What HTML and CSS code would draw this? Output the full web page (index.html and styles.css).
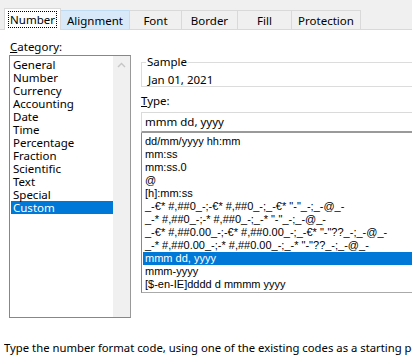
FILE: index.html
```html
<!DOCTYPE html>
<html lang="en">
<head>
  <meta charset="UTF-8">
  <title>Format Cells</title>
  <link rel="stylesheet" href="styles.css">
</head>
<body>

  <div class="tabs">
    <div class="tab active"><span class="focus">Number</span></div>
    <div class="tab hover">Alignment</div>
    <div class="tab">Font</div>
    <div class="tab">Border</div>
    <div class="tab">Fill</div>
    <div class="tab">Protection</div>
  </div>

  <div class="panel">
    <div class="left">
      <div class="label"><u>C</u>ategory:</div>
      <div class="category">
        <ul class="items">
          <li>General</li>
          <li>Number</li>
          <li>Currency</li>
          <li>Accounting</li>
          <li>Date</li>
          <li>Time</li>
          <li>Percentage</li>
          <li>Fraction</li>
          <li>Scientific</li>
          <li>Text</li>
          <li>Special</li>
          <li class="selected">Custom</li>
        </ul>
        <div class="scrollbar">
          <svg width="9" height="6" viewBox="0 0 9 6"><path d="M1 5 L4.5 1.5 L8 5" fill="none" stroke="#c6c6c6" stroke-width="1.4"/></svg>
        </div>
      </div>
    </div>

    <div class="right">
      <fieldset class="sample">
        <legend>Sample</legend>
        <div class="sample-value">Jan 01, 2021</div>
      </fieldset>
      <div class="label type-label"><u>T</u>ype:</div>
      <div class="type-input">mmm dd, yyyy</div>
      <ul class="type-list">
        <li>dd/mm/yyyy hh:mm</li>
        <li>mm:ss</li>
        <li>mm:ss.0</li>
        <li>@</li>
        <li>[h]:mm:ss</li>
        <li>_-€* #,##0_-;-€* #,##0_-;_-€* "-"_-;_-@_-</li>
        <li>_-* #,##0_-;-* #,##0_-;_-* "-"_-;_-@_-</li>
        <li>_-€* #,##0.00_-;-€* #,##0.00_-;_-€* "-"??_-;_-@_-</li>
        <li>_-* #,##0.00_-;-* #,##0.00_-;_-* "-"??_-;_-@_-</li>
        <li class="selected">mmm dd, yyyy</li>
        <li>mmm-yyyy</li>
        <li>[$-en-IE]dddd d mmmm yyyy</li>
      </ul>
    </div>
  </div>

  <p class="hint">Type the number format code, using one of the existing codes as a starting point.</p>

</body>
</html>
```

FILE: styles.css
```css
body {
  margin: 0;
  width: 412px;
  height: 360px;
  overflow: hidden;
  background: #fff;
  font-family: "Noto Sans", "Open Sans", sans-serif;
  font-size: 11.5px;
  color: #000;
}

.tabs {
  display: flex;
  align-items: flex-end;
  height: 29px;
  padding-left: 4px;
  background: #f0f0f0;
  border-bottom: 1px solid #d9d9d9;
}

.tab {
  display: flex;
  align-items: center;
  justify-content: center;
  height: 18px;
  border: 1px solid #d9d9d9;
  border-bottom: none;
  margin-left: -1px;
  box-sizing: content-box;
  white-space: nowrap;
}

.tab:nth-child(1) { width: 55px; }
.tab:nth-child(2) { width: 68px; }
.tab:nth-child(3) { width: 51px; }
.tab:nth-child(4) { width: 55px; }
.tab:nth-child(5) { width: 53px; }
.tab:nth-child(6) { width: 68px; }

.tab.active {
  height: 21px;
  margin-left: 0;
  margin-bottom: -1px;
  background: #fff;
  position: relative;
  z-index: 1;
}

.tab.hover {
  background: #d8eaf9;
  border-color: #c0dcf3;
}

.focus {
  padding: 0 1px;
  outline: 1px dotted #000;
  line-height: 15px;
}

.panel {
  display: flex;
  padding: 9px 0 0 9px;
}

.label {
  height: 15px;
  line-height: 15px;
  margin-left: 1px;
}

.category {
  display: flex;
  width: 120px;
  height: 261px;
  margin-top: 1px;
  border: 1px solid #828790;
  border-right-color: #999;
}

.items {
  list-style: none;
  margin: 0;
  padding: 2px 0 0 1px;
  flex: 1;
}

.items li {
  height: 13px;
  line-height: 13px;
  padding-left: 2px;
}

.items li.selected,
.type-list li.selected {
  background: #0078d7;
  color: #fff;
}

.scrollbar {
  width: 17px;
  background: #f0f0f0;
  display: flex;
  justify-content: center;
  padding-top: 6px;
  box-sizing: border-box;
}

.right {
  flex: 1;
  margin-left: 10px;
  padding-top: 17px;
}

.sample {
  margin: 0;
  padding: 4px 0 0 5px;
  height: 25px;
  border: 1px solid #dcdcdc;
  border-right: none;
  box-sizing: content-box;
}

.sample legend {
  padding: 0 1px;
  margin-left: -1px;
  line-height: 12px;
}

.sample-value {
  line-height: 15px;
  margin-left: 1px;
}

.type-label {
  margin-top: 6px;
  margin-left: 0;
}

.type-input {
  margin-top: 4px;
  height: 18px;
  line-height: 18px;
  padding-left: 3px;
  border-top: 1px solid #dadada;
  border-left: 1px solid #dadada;
  border-bottom: 2px solid #9a9a9a;
}

.type-list {
  list-style: none;
  margin: 0;
  padding: 2px 0 0 1px;
  height: 157px;
  border-left: 1px solid #828790;
  border-bottom: 1px solid #aaa;
  font-family: "Liberation Sans", Arial, sans-serif;
  font-size: 11px;
  white-space: nowrap;
  overflow: hidden;
}

.type-list li {
  height: 13px;
  line-height: 13px;
  padding-left: 2px;
}

.hint {
  margin: 22px 0 0 4px;
  font-size: 11.3px;
  white-space: nowrap;
  overflow: hidden;
  line-height: 15px;
}
```
